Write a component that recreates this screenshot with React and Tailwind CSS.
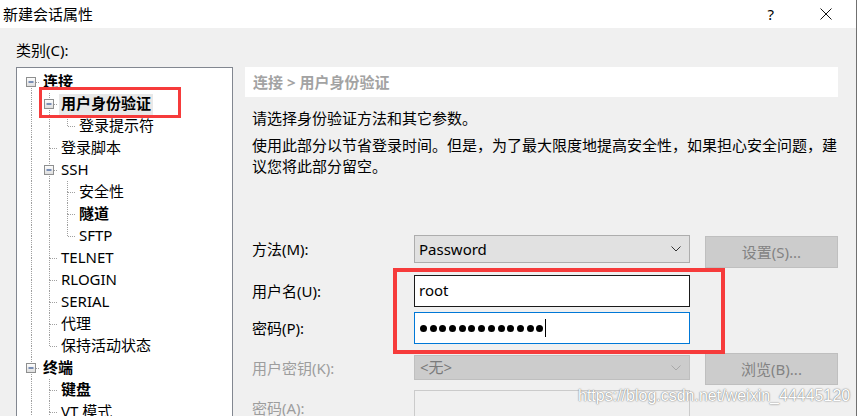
import React from "react";

const items = [
  { t: "连接", l: 0, exp: true, b: true, last: false, anc: [], first: true },
  { t: "用户身份验证", l: 1, exp: true, b: true, sel: true, last: false, anc: [true] },
  { t: "登录提示符", l: 2, last: true, anc: [true, true] },
  { t: "登录脚本", l: 1, last: false, anc: [true] },
  { t: "SSH", l: 1, exp: true, last: false, anc: [true] },
  { t: "安全性", l: 2, last: false, anc: [true, true] },
  { t: "隧道", l: 2, b: true, last: false, anc: [true, true] },
  { t: "SFTP", l: 2, last: true, anc: [true, true] },
  { t: "TELNET", l: 1, last: false, anc: [true] },
  { t: "RLOGIN", l: 1, last: false, anc: [true] },
  { t: "SERIAL", l: 1, last: false, anc: [true] },
  { t: "代理", l: 1, last: false, anc: [true] },
  { t: "保持活动状态", l: 1, last: true, anc: [true] },
  { t: "终端", l: 0, exp: true, b: true, last: false, anc: [] },
  { t: "键盘", l: 1, b: true, last: false, anc: [true] },
  { t: "VT 模式", l: 1, last: false, anc: [true] },
];

function Cell({ vTop, vBottom, h, box }) {
  return (
    <svg width="18" height="22" className="shrink-0 block">
      <defs>
        <linearGradient id="bx" x1="0" y1="0" x2="0" y2="1">
          <stop offset="0" stopColor="#ffffff" />
          <stop offset="1" stopColor="#dcdcdc" />
        </linearGradient>
      </defs>
      {vTop && <line x1="9.5" y1="0" x2="9.5" y2="11" stroke="#a0a0a0" strokeDasharray="1 1" />}
      {vBottom && <line x1="9.5" y1="11" x2="9.5" y2="22" stroke="#a0a0a0" strokeDasharray="1 1" />}
      {h && <line x1="10" y1="11.5" x2="18" y2="11.5" stroke="#a0a0a0" strokeDasharray="1 1" />}
      {box && (
        <g>
          <rect x="4.5" y="6.5" width="9" height="9" fill="url(#bx)" stroke="#8e8f8f" />
          <line x1="6.5" y1="11" x2="11.5" y2="11" stroke="#2c4f8f" strokeWidth="1.2" />
        </g>
      )}
    </svg>
  );
}

function TreeRow({ it }) {
  return (
    <div className="flex h-[22px] items-center">
      {it.anc.map((a, i) => (
        <Cell key={i} vTop={a} vBottom={a} />
      ))}
      <Cell vTop={!it.first} vBottom={!it.last} h box={it.exp} />
      <span
        className={
          "ml-[1px] px-[2px] h-[21px] leading-[19px] whitespace-nowrap text-[15px] text-black " +
          (it.b ? "font-bold " : "") +
          (it.sel ? "bg-[#e8e8e8]" : "")
        }
      >
        {it.t}
      </span>
    </div>
  );
}

function Chevron({ color }) {
  return (
    <svg width="10" height="6" viewBox="0 0 10 6" className="block">
      <path d="M0.5 0.5 L5 5 L9.5 0.5" fill="none" stroke={color} strokeWidth="1" />
    </svg>
  );
}

export default function App() {
  return (
    <div className="relative w-[857px] h-[416px] overflow-hidden bg-[#f0f0f0] border-r border-[#707070] font-['Noto_Sans','Noto_Sans_CJK_SC',sans-serif] text-black">
      {/* title bar */}
      <div className="h-[28px] bg-white flex items-center">
        <span className="pl-[3px] text-[15px] leading-[20px]">新建会话属性</span>
        <div className="ml-auto flex items-center mr-[24px]">
          <span className="text-[15px] leading-[20px] mr-[46px]">?</span>
          <svg width="12" height="12" viewBox="0 0 12 12" className="block">
            <path d="M0.5 0.5 L11.5 11.5 M11.5 0.5 L0.5 11.5" stroke="#111" strokeWidth="1" fill="none" />
          </svg>
        </div>
      </div>

      <div className="px-[16px]">
        <div className="pt-[13px] h-[39px] text-[15px] leading-[18px]">类别(C):</div>
        <div className="flex gap-[12px]">
          {/* tree */}
          <div className="w-[217px] h-[360px] bg-white border border-[#828790] pl-[5px] pt-[3px]">
            {items.map((it, i) => (
              <TreeRow key={i} it={it} />
            ))}
          </div>

          {/* right panel */}
          <div className="w-[593px]">
            <div className="h-[30px] bg-white pl-[8px] flex items-center text-[15px] text-[#a3a3a3] font-bold">
              连接 &gt; 用户身份验证
            </div>
            <div className="pl-[7px] text-[15px]">
              <p className="mt-[11px] leading-[21px]">请选择身份验证方法和其它参数。</p>
              <p className="mt-[6px] leading-[21px]">
                使用此部分以节省登录时间。但是，为了最大限度地提高安全性，如果担心安全问题，建议您将此部分留空。
              </p>

              <div className="mt-[58px]">
                {/* row 1 */}
                <div className="flex h-[33px] items-start">
                  <div className="w-[162px] h-[28px] flex items-center">方法(M):</div>
                  <div className="w-[276px] h-[28px] bg-[#e1e1e1] border border-[#adadad] flex items-center pl-[4px] pr-[8px]">
                    <span className="flex-1">Password</span>
                    <Chevron color="#333" />
                  </div>
                  <div className="ml-[15px] mt-[1px] w-[133px] h-[32px] bg-[#cccccc] border border-[#bfbfbf] flex items-center justify-center text-[#838383]">
                    设置(S)...
                  </div>
                </div>
                {/* row 2 */}
                <div className="flex h-[32px] items-center mt-[7px]">
                  <div className="w-[162px]">用户名(U):</div>
                  <div className="w-[276px] h-[32px] bg-white border border-[#1a1a1a] flex items-center pl-[4px] pb-[2px]">
                    root
                  </div>
                </div>
                {/* row 3 */}
                <div className="flex h-[32px] items-center mt-[5px]">
                  <div className="w-[162px]">密码(P):</div>
                  <div className="w-[276px] h-[32px] bg-white border border-[#0078d7] flex items-center pl-[5px]">
                    <div className="flex gap-[2.7px]">
                      {Array.from({ length: 13 }).map((_, i) => (
                        <span key={i} className="block w-[7px] h-[7px] rounded-full bg-black" />
                      ))}
                    </div>
                    <span className="block ml-[2px] w-[1px] h-[18px] bg-black" />
                  </div>
                </div>
                {/* row 4 */}
                <div className="flex h-[32px] items-start mt-[9px]">
                  <div className="w-[162px] h-[30px] flex items-center text-[#9d9d9d]">用户密钥(K):</div>
                  <div className="mt-[2px] w-[276px] h-[25px] bg-[#cccccc] border border-[#bfbfbf] flex items-center pl-[5px] pr-[8px] text-[#7a7a7a]">
                    <span className="flex-1">&lt;无&gt;</span>
                    <Chevron color="#a8a8a8" />
                  </div>
                  <div className="ml-[15px] w-[133px] h-[32px] bg-[#cccccc] border border-[#bfbfbf] flex items-center justify-center text-[#838383]">
                    浏览(B)...
                  </div>
                </div>
                {/* row 5 */}
                <div className="flex items-start mt-[5px]">
                  <div className="w-[162px] pt-[8px] leading-[21px] text-[#9d9d9d]">密码(A):</div>
                  <div className="w-[276px] h-[32px] bg-[#f0f0f0] border border-[#cbcbcb]" />
                </div>
              </div>
            </div>
          </div>
        </div>
      </div>

      {/* annotations */}
      <div className="absolute left-[39px] top-[87px] w-[142px] h-[31px] border-[3px] border-[#f63b3b]" />
      <div className="absolute left-[393px] top-[268px] w-[332px] h-[86px] border-[4px] border-[#f63b3b]" />

      {/* watermark */}
      <div className="absolute left-[578px] top-[387px] text-[16px] leading-[18px] font-['Liberation_Sans',sans-serif] text-white [text-shadow:0_0_1px_#6f6f6f,0_0_2px_#9a9a9a]">
        https://blog.csdn.net/weixin_44445120
      </div>
    </div>
  );
}
